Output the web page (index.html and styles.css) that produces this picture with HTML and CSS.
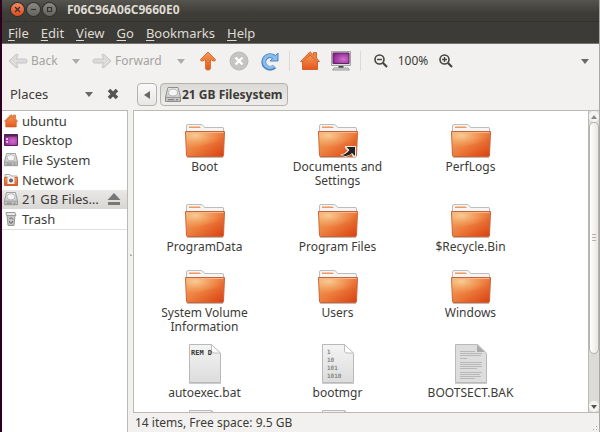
FILE: index.html
```
<!DOCTYPE html>
<html lang="en">
<head>
 <meta charset="utf-8">
 <title>F06C96A06C9660E0</title>
 <link rel="stylesheet" href="styles.css">
</head>
<body>
 <svg class="defs" aria-hidden="true">
  <defs>
   <linearGradient id="orange" x1="0" y1="0" x2="0" y2="1"><stop offset="0" stop-color="#f79a55"/><stop offset="1" stop-color="#e2561e"/></linearGradient>
   <linearGradient id="flap" x1="0" y1="0" x2="1" y2="1"><stop offset="0" stop-color="#f3ab68"/><stop offset=".5" stop-color="#ec7c3c"/><stop offset="1" stop-color="#d93e10"/></linearGradient>
   <radialGradient id="shine" cx=".25" cy=".2" r=".7"><stop offset="0" stop-color="#f9d29b" stop-opacity=".9"/><stop offset="1" stop-color="#f5a460" stop-opacity="0"/></radialGradient>
   <linearGradient id="paper" x1="0" y1="0" x2="0" y2="1"><stop offset="0" stop-color="#f4f4f4"/><stop offset="1" stop-color="#dcdcdc"/></linearGradient>
   <radialGradient id="purple" cx=".65" cy=".6" r=".7"><stop offset="0" stop-color="#d070cc"/><stop offset="1" stop-color="#8c2090"/></radialGradient>
   <linearGradient id="metal" x1="0" y1="0" x2="0" y2="1"><stop offset="0" stop-color="#eee"/><stop offset="1" stop-color="#bbb"/></linearGradient>
  </defs>
  <symbol id="folder" viewBox="0 0 40 34">
   <path d="M1.500 7V2Q1.500 .5 3 .5H16Q17.500 .5 18.500 2L19.500 3.500H38Q38.500 3.500 38.500 5V9H1.500z" fill="#f5f5f5" stroke="#bdbdbd"/>
   <path d="M4 2.500H14.500L16 4H4z" fill="#f09a5e"/>
   <path d="M.5 7.500H39.500L38.500 31.500Q38.500 32.500 37.500 32.500H2.500Q1.500 32.500 1.500 31.500z" fill="url(#flap)" stroke="#c8643a"/>
   <path d="M1 8H39L38.600 18Q25 18 2 26z" fill="url(#shine)"/>
   <path d="M1.500 8.500H38.500" stroke="#f7b78a"/>
   <path d="M2 33.500H38" stroke="#c9b8b0"/>
  </symbol>
  <symbol id="file" viewBox="0 0 32 40">
   <path d="M.5 .5H22.500L31.500 9.500V38.500H.5z" fill="url(#paper)" stroke="#b9b9b9"/>
   <path d="M22.500 .5V7Q23 9 25 9H31.500z" fill="#fff" stroke="#bcbcbc"/>
   <path d="M0 39.500H32" stroke="#ccc"/>
  </symbol>
  <symbol id="home" viewBox="0 0 20 20">
   <path d="M2.500 10V18.500H17.500V10L10 3z" fill="url(#orange)" stroke="#d4602a"/>
   <path d="M.5 10.500L10 .8L13.500 4V1.500H16.500V7L19.500 10.500H17L10 4L3 10.500z" fill="#ee8342" stroke="#cf6a38"/>
  </symbol>
  <symbol id="drive" viewBox="0 0 16 16">
   <path d="M3 .5H13L15.500 10V14.500H.5V10z" fill="url(#metal)" stroke="#8f8f8f"/>
   <ellipse cx="8" cy="5.500" rx="4.500" ry="3.500" fill="#f5f5f5" stroke="#b5b5b5"/>
   <path d="M1 10.500H15" stroke="#999"/>
   <path d="M3 12.700H9M11 12.700H13" stroke="#777"/>
  </symbol>
 </svg>

 <div class="window">
  <header class="titlebar">
   <button class="wm close" aria-label="Close"><svg viewBox="0 0 13 13"><path d="M4 4l5 5M9 4l-5 5"/></svg></button>
   <button class="wm" aria-label="Minimize"><svg viewBox="0 0 13 13"><path d="M4 6.500h5"/></svg></button>
   <button class="wm" aria-label="Maximize"><svg viewBox="0 0 13 13"><path d="M4.500 4.500h4v4h-4z"/></svg></button>
   <h1>F06C96A06C9660E0</h1>
  </header>

  <nav class="menubar">
   <button><u>F</u>ile</button>
   <button><u>E</u>dit</button>
   <button><u>V</u>iew</button>
   <button><u>G</u>o</button>
   <button><u>B</u>ookmarks</button>
   <button><u>H</u>elp</button>
  </nav>

  <div class="toolbar">
   <button class="nav back" disabled>
    <svg class="i20" viewBox="0 0 20 16"><path d="M1 8L8 1.500Q10 .5 10 2.500L8 6H17.500Q19 6 19 8T17.500 10H8L10 13.500Q10 15.500 8 14.500z" fill="#dedcda" stroke="#c6c4c1"/></svg>
    <span>Back</span>
    <i class="caret"></i>
   </button>
   <button class="nav forward" disabled>
    <svg class="i20" viewBox="0 0 20 16"><path d="M19 8L12 1.500Q10 .5 10 2.500L12 6H2.500Q1 6 1 8T2.500 10H12L10 13.500Q10 15.500 12 14.500z" fill="#dedcda" stroke="#c6c4c1"/></svg>
    <span>Forward</span>
    <i class="caret"></i>
   </button>
   <button class="tool" aria-label="Up"><svg class="i20" viewBox="0 0 20 20"><path d="M10 1L17.500 8.500Q17.500 10.500 15.500 10L12.500 8.500V17.500Q12.500 19 10 19T7.500 17.500V8.500L4.500 10Q2.500 10.500 2.500 8.500z" fill="url(#orange)" stroke="#d87238"/></svg></button>
   <button class="tool" disabled aria-label="Stop"><svg class="i20" viewBox="0 0 20 20"><circle cx="10" cy="10" r="9" fill="#c6c4c2" stroke="#bab8b5"/><path d="M6.500 6.500l7 7M13.500 6.500l-7 7" stroke="#fff" stroke-width="2.400"/></svg></button>
   <button class="tool" aria-label="Reload"><svg class="i20" viewBox="0 0 20 20"><path d="M14.500 15.500A6.300 6.300 0 1 1 14 6" fill="none" stroke="#4a86c6" stroke-width="5"/><path d="M18 2V10H10L12.500 7.500L15.500 4.500z" fill="#8cbcea" stroke="#4a86c6"/><path d="M14 15A6 6 0 1 1 14.500 6.500" fill="none" stroke="#8cbcea" stroke-width="3"/></svg></button>
   <span class="sep"></span>
   <button class="tool" aria-label="Home"><svg class="i20"><use href="#home"/></svg></button>
   <button class="tool" aria-label="Computer"><svg class="i20" viewBox="0 0 20 20"><path d="M.5 .5H19.500V14.500H.5z" fill="#ddd" stroke="#a5a5a5"/><path d="M2 2H18V12.500H2z" fill="url(#purple)" stroke="#5c2860"/><path d="M7.500 15H12.500V17H7.500z" fill="#444"/><path d="M3 17H17L18.500 19H1.500z" fill="#ddd" stroke="#999"/></svg></button>
   <span class="sep"></span>
   <button class="tool" aria-label="Zoom out"><svg class="i14" viewBox="0 0 14 14"><circle cx="5.500" cy="5.500" r="4.500" fill="none" stroke="#45443f" stroke-width="1.600"/><path d="M3 5.500h5" stroke="#45443f" stroke-width="1.400"/><path d="M9 9l4 4" stroke="#45443f" stroke-width="2.200"/></svg></button>
   <span class="percent">100%</span>
   <button class="tool" aria-label="Zoom in"><svg class="i14" viewBox="0 0 14 14"><circle cx="5.500" cy="5.500" r="4.500" fill="none" stroke="#45443f" stroke-width="1.600"/><path d="M3 5.500h5M5.500 3v5" stroke="#45443f" stroke-width="1.400"/><path d="M9 9l4 4" stroke="#45443f" stroke-width="2.200"/></svg></button>
   <button class="more" aria-label="View options"><i class="caret"></i></button>
  </div>

  <div class="body">
   <aside class="side">
    <div class="side-head">
     <select aria-label="Side pane"><option>Places</option></select>
     <i class="caret"></i>
     <button aria-label="Close side pane"><svg class="i12" viewBox="0 0 12 12"><path d="M2 2l8 8M10 2l-8 8" stroke="#555" stroke-width="3.600"/></svg></button>
    </div>
    <div class="side-list">
     <ul class="places">
      <li><a href="#"><svg class="i14"><use href="#home"/></svg><span>ubuntu</span></a></li>
      <li><a href="#"><svg class="i14" viewBox="0 0 14 14"><path d="M.5 1.500H13.500V12.500H.5z" fill="url(#purple)" stroke="#5c1a60"/><path d="M1 2H13V3.500H1z" fill="#44303f"/><path d="M2 6h2M2 9h2" stroke="#f5e0f5" stroke-width="1.500"/></svg><span>Desktop</span></a></li>
      <li><a href="#"><svg class="i14" viewBox="0 0 16 16"><use href="#drive"/></svg><span>File System</span></a></li>
      <li><a href="#"><svg class="i14" viewBox="0 0 14 14"><path d="M1 4V1.500H6L7 3H13V5z" fill="#f2f2f2" stroke="#aaa"/><path d="M.5 4.500H13.500V12.500H.5z" fill="url(#orange)" stroke="#c8643a"/><path d="M3.500 4H10.500V11H3.500z" fill="#eee"/><circle cx="7" cy="7.500" r="2" fill="#666"/></svg><span>Network</span></a></li>
      <li class="selected"><a href="#"><svg class="i14" viewBox="0 0 16 16"><use href="#drive"/></svg><span>21 GB Files…</span></a>
       <button aria-label="Eject"><svg class="i14" viewBox="0 0 14 14"><path d="M7 1l6.500 7H.5z" fill="#777"/><path d="M1 10H13V13H1z" fill="#777"/></svg></button></li>
      <li><a href="#"><svg class="i14" viewBox="0 0 14 14"><path d="M3 3.500H11L10 13.500H4z" fill="#c4c4c4" stroke="#999"/><path d="M2 .5H11L12 3.500H2.500z" fill="#e8e8e8" stroke="#999"/><path d="M5.500 7l1.500-1.500 2 2M9 9l-1 2H6L5.500 9" fill="none" stroke="#666"/></svg><span>Trash</span></a></li>
     </ul>
    </div>
   </aside>

   <div class="handle"></div>

   <main class="main">
    <div class="pathbar">
     <button class="prev" aria-label="Previous"><svg viewBox="0 0 6 8"><path d="M6 0v8L0 4z" fill="#6a6863"/></svg></button>
     <button class="crumb"><svg class="i16"><use href="#drive"/></svg>21 GB Filesystem</button>
    </div>

    <div class="view">
     <ul class="files">
      <li><div class="icon"><svg class="folder"><use href="#folder"/></svg></div>Boot</li>
      <li><div class="icon"><svg class="folder"><use href="#folder"/></svg><svg class="emblem" viewBox="0 0 16 11"><path d="M5 0H16V11H13L11.500 8Q8 11.500 4 10.500L0 8.500Q4 8.500 7.500 4.500L5 2z" fill="#f3e4da"/><path d="M6.500 1H15V10L12 7Q9 10.500 5 10L2 9Q6 8.500 9.500 4z" fill="#222"/></svg></div>Documents and Settings</li>
      <li><div class="icon"><svg class="folder"><use href="#folder"/></svg></div>PerfLogs</li>
      <li><div class="icon"><svg class="folder"><use href="#folder"/></svg></div>ProgramData</li>
      <li><div class="icon"><svg class="folder"><use href="#folder"/></svg></div>Program Files</li>
      <li><div class="icon"><svg class="folder"><use href="#folder"/></svg></div>$Recycle.Bin</li>
      <li><div class="icon"><svg class="folder"><use href="#folder"/></svg></div>System Volume Information</li>
      <li><div class="icon"><svg class="folder"><use href="#folder"/></svg></div>Users</li>
      <li><div class="icon"><svg class="folder"><use href="#folder"/></svg></div>Windows</li>
      <li><div class="icon"><svg class="file" viewBox="0 0 32 40"><use href="#file"/><text class="code" x="2" y="11">REM D</text></svg></div>autoexec.bat</li>
      <li><div class="icon"><svg class="file" viewBox="0 0 32 40"><use href="#file"/><g class="bits"><text x="5" y="10">1</text><text x="5" y="18">10</text><text x="5" y="26">101</text><text x="5" y="34">1010</text></g></svg></div>bootmgr</li>
      <li><div class="icon"><svg class="file" viewBox="0 0 32 40"><use href="#file"/><path d="M1 1H22L31 10V38H1z" fill="#dcdddc"/><path d="M22 1V8H30z" fill="#aaa"/><path d="M5 7.500H20M5 9.500H27M5 11.500H26M5 14.500H12M5 18.500H27M5 20.500H26M5 22.500H27M5 24.500H22M5 28.500H27M5 30.500H25M5 32.500H26M5 34.500H20" stroke="#b8b8b8"/></svg></div>BOOTSECT.BAK</li>
      <li><div class="icon"><svg class="file"><use href="#file"/></svg></div></li>
      <li><div class="icon"><svg class="file"><use href="#file"/></svg></div></li>
     </ul>
     <div class="scroll">
      <button aria-label="Scroll up"><svg viewBox="0 0 6 4"><path d="M3 0l3 4H0z" fill="#8a8884"/></svg></button>
      <div class="thumb"><i></i></div>
      <div class="trough"></div>
      <button aria-label="Scroll down"><svg viewBox="0 0 6 4"><path d="M0 0h6L3 4z" fill="#55534f"/></svg></button>
     </div>
    </div>

    <footer class="status"><span>14 items, Free space: 9.5 GB</span><i class="grip"></i></footer>
   </main>
  </div>
 </div>
</body>
</html>
```
FILE: styles.css
```
* {
 box-sizing: border-box;
}
body {
 margin: 0;
 font: 12px/16px "Noto Sans", "Open Sans", sans-serif;
 color: #3c3b37;
 background: #2c001e;
}
button,
select {
 margin: 0;
 padding: 0;
 border: 0;
 background: none;
 font: inherit;
 color: inherit;
}
ul {
 margin: 0;
 padding: 0;
 list-style: none;
}
svg {
 display: block;
 flex: none;
}
.defs {
 position: absolute;
 width: 0;
 height: 0;
}
.i12 { width: 12px; height: 12px; }
.i14 { width: 14px; height: 14px; }
.i16 { width: 16px; height: 16px; }
.i20 { width: 20px; height: 20px; }

.window {
 display: flex;
 flex-direction: column;
 height: 100vh;
 margin-left: 2px;
 border-right: 1px solid #aaa8a5;
 background: #f2f1f0;
}

/* title and menus */
.titlebar {
 display: flex;
 flex: none;
 align-items: center;
 gap: 3px;
 height: 22px;
 padding: 0 9px 2px;
 background: linear-gradient(#55544e, #3e3d38 60%, #3c3b37);
 border-bottom: 1px solid #33322e;
}
.titlebar h1 {
 margin: 0 0 0 8px;
 font-size: 12px;
 line-height: 16px;
 color: #dfdbd2;
}
.wm {
 width: 13px;
 height: 13px;
 border-radius: 50%;
 background: linear-gradient(#8a8983, #64635d);
 box-shadow: 0 0 0 1px #31302c;
}
.wm path {
 fill: none;
 stroke: #33322e;
 stroke-width: 1.2px;
}
.wm.close {
 background: linear-gradient(#f58a62, #df4c1c);
}
.menubar {
 display: flex;
 flex: none;
 gap: 12px;
 height: 22px;
 padding: 0 6px;
 background: #3c3b37;
 border-bottom: 1px solid #75736f;
 color: #dfdbd2;
 font-size: 13px;
}
.menubar u {
 text-underline-offset: 2px;
}

/* toolbar */
.toolbar {
 display: flex;
 flex: none;
 align-items: center;
 height: 34px;
 padding: 0 10px 0 6px;
}
.nav {
 display: flex;
 align-items: center;
 gap: 3px;
 color: #a5a39f;
}
.nav .caret {
 margin-left: auto;
 opacity: .5;
}
.back {
 width: 72px;
 margin-right: 12px;
}
.forward {
 width: 93px;
 margin-right: 7px;
}
.caret {
 border: 4px solid transparent;
 border-top: 5px solid #6a6863;
 border-bottom: 0;
}
.tool {
 display: grid;
 place-items: center;
 width: 31px;
 height: 28px;
}
.sep {
 width: 1px;
 height: 20px;
 margin: 0 4px;
 background: #dcdad7;
}
.percent {
 width: 34px;
 text-align: center;
}
.more {
 margin-left: auto;
}
.more .caret {
 display: block;
}

.body {
 display: flex;
 flex: 1;
 min-height: 0;
}

/* side pane */
.side {
 display: flex;
 flex: none;
 flex-direction: column;
 width: 126px;
 font-size: 13px;
}
.side-head {
 display: flex;
 flex: none;
 align-items: center;
 height: 32px;
 padding: 0 9px 0 8px;
}
.side-head select {
 flex: 1;
 appearance: none;
}
.side-head .caret {
 margin-right: 14px;
}
.side-list {
 flex: 1;
 background: #fff;
 border: 1px solid #bcb9b5;
 border-width: 1px 1px 0 0;
}
.places {
 display: grid;
 grid-template-rows: repeat(6, 1fr);
 height: 119px;
 border-bottom: 1px solid #e2e0dd;
}
.places li {
 display: flex;
 align-items: center;
 min-width: 0;
 padding: 0 6px 0 2px;
}
.places a {
 display: flex;
 align-items: center;
 gap: 4px;
 flex: 1;
 color: inherit;
 text-decoration: none;
 white-space: nowrap;
}
.places .selected {
 background: linear-gradient(#eae8e6, #d9d7d4);
}
.handle {
 flex: none;
 width: 5px;
 background: radial-gradient(circle, #aaa 1px, transparent 1px) center / 3px 3px no-repeat;
}

/* files */
.main {
 display: flex;
 flex: 1;
 flex-direction: column;
 min-width: 0;
}
.pathbar {
 display: flex;
 flex: none;
 gap: 3px;
 height: 32px;
 padding: 5px 4px 4px;
}
.pathbar button {
 display: flex;
 align-items: center;
 justify-content: center;
 border: 1px solid #b5b2ae;
 border-radius: 4px;
}
.prev {
 width: 20px;
 background: linear-gradient(#fafafa, #e8e6e4);
}
.prev svg {
 width: 6px;
 height: 8px;
}
.crumb {
 gap: 1px;
 padding: 0 4px;
 font-weight: bold;
 background: linear-gradient(#dcdad7, #efedeb);
}
.view {
 display: flex;
 flex: 1;
 min-height: 0;
 border: 1px solid #bcb9b5;
 border-right: 0;
}
.files {
 display: grid;
 flex: 1;
 grid-template-columns: repeat(auto-fill, 133px);
 align-content: start;
 row-gap: 10px;
 padding: 7px 0 0 4px;
 overflow: hidden;
 background: #fff;
 line-height: 14px;
 text-align: center;
}
.files li {
 padding: 0 16px;
}
.icon {
 position: relative;
 display: flex;
 align-items: flex-end;
 justify-content: center;
 height: 40px;
 margin-bottom: 2px;
}
.folder {
 width: 40px;
 height: 34px;
}
.file {
 width: 32px;
 height: 40px;
}
.emblem {
 position: absolute;
 right: 32px;
 bottom: 1px;
 width: 16px;
 height: 11px;
}
.code {
 font: bold 7px "DejaVu Sans Mono", monospace;
 fill: #333;
}
.bits {
 font: bold 6px "DejaVu Sans Mono", monospace;
 fill: #888;
}
.scroll {
 display: flex;
 flex: none;
 flex-direction: column;
 width: 11px;
 border-left: 1px solid #bcb9b5;
 background: #dddbd8;
}
.scroll button {
 display: grid;
 place-items: center;
 height: 11px;
 background: #f5f4f3;
 border-radius: 5px;
}
.scroll svg {
 width: 6px;
 height: 4px;
}
.thumb {
 display: grid;
 flex: 233;
 place-items: center;
 border: 1px solid #b5b2ae;
 border-radius: 5px;
 background: linear-gradient(90deg, #fff, #e9e7e5);
}
.thumb i {
 width: 4px;
 height: 7px;
 background: repeating-linear-gradient(#b5b2ae 0 1px, transparent 1px 3px);
}
.trough {
 flex: 48;
}
.status {
 display: flex;
 flex: none;
 align-items: center;
 justify-content: space-between;
 height: 19px;
 padding: 0 0 0 2px;
}
.grip {
 align-self: flex-end;
 width: 10px;
 height: 10px;
 background: radial-gradient(circle, #aaa 1px, transparent 1px) 0 0 / 3px 3px;
 clip-path: polygon(100% 0, 100% 100%, 0 100%);
}
```
